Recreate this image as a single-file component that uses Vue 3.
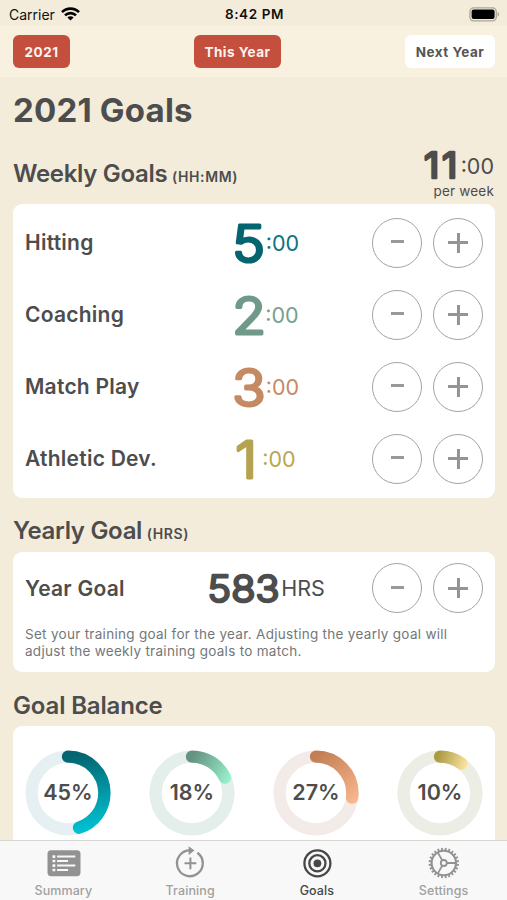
<script setup>
const weekly = [
  { name: 'Hitting', hours: '5', width: 32, color: '#04646f', minor: '#0a7480' },
  { name: 'Coaching', hours: '2', width: 31, color: '#6f9a8a', minor: '#76a08f' },
  { name: 'Match Play', hours: '3', width: 32, color: '#c68a63', minor: '#c68a63' },
  { name: 'Athletic Dev.', hours: '1', width: 25, color: '#b5a352', minor: '#b8a74e' },
]

const RADIUS = 36.4
const LENGTH = 2 * Math.PI * RADIUS

const balance = [
  { id: 'hit', pct: 45, track: '#e6f0f2', from: '#04646f', to: '#00bfd0', box: [43, 6, 56, 80] },
  { id: 'coach', pct: 18, track: '#e4eeea', from: '#659382', to: '#98f0cb', box: [43, 8, 80, 30] },
  { id: 'match', pct: 27, track: '#f2ebe8', from: '#c47e55', to: '#f7b68b', box: [43, 6, 80, 52] },
  { id: 'dev', pct: 10, track: '#ecede4', from: '#aa9a42', to: '#ffe6a3', box: [40, 8, 70, 18] },
]

const teeth = Array.from({ length: 24 }, (_, i) => i * 15)
</script>

<template>
  <div class="screen">
    <div class="status">
      <div class="carrier">
        <span>Carrier</span>
        <svg width="19" height="14" viewBox="0 0 19 14" fill="none" stroke="#000" stroke-width="2.6">
          <path d="M1 5.2a12 12 0 0 1 17 0" />
          <path d="M4 8.4a7.8 7.8 0 0 1 11 0" />
          <path d="M9.5 13.6 6.4 10.5a4.4 4.4 0 0 1 6.2 0z" fill="#000" stroke="none" />
        </svg>
      </div>
      <div class="clock">8:42 PM</div>
      <svg class="battery" width="31" height="15" viewBox="0 0 31 15">
        <rect x="0.9" y="0.9" width="26.4" height="12.9" rx="3.8" fill="none" stroke="#aaa797" stroke-width="1.3" />
        <rect x="2.6" y="2.5" width="23" height="9.6" rx="2" fill="#000" />
        <path d="M28.6 5c2 .6 2 4.2 0 4.8z" fill="#aaa797" />
      </svg>
    </div>

    <div class="toolbar">
      <button class="pill red year">2021</button>
      <button class="pill red current">This Year</button>
      <button class="pill white next">Next Year</button>
    </div>

    <main>
      <h1>2021 Goals</h1>

      <div class="heading weekly-head">
        <h2><span class="wk">Weekly Goals</span> <small>(HH:MM)</small></h2>
        <div class="total">
          <div class="amount">
            <svg width="37" height="35"><text class="digits d-total" x="0" y="30" transform="scale(1.06 1)">11</text></svg>
            <span class="minor">:00</span>
          </div>
          <div class="per">per week</div>
        </div>
      </div>

      <section class="card goals">
        <div v-for="g in weekly" :key="g.name" class="row">
          <div class="label">{{ g.name }}</div>
          <div class="value">
            <svg :width="g.width" height="50">
              <text
                class="digits d-week"
                x="-1.5"
                y="44"
                transform="scale(1.1 1)"
                :style="{ fill: g.color, stroke: g.color }"
              >{{ g.hours }}</text>
            </svg>
            <span class="minor" :style="{ color: g.minor }">:00</span>
          </div>
          <button class="round"><i class="minus"></i></button>
          <button class="round"><i class="plus"></i></button>
        </div>
      </section>

      <div class="heading yearly-head">
        <h2><span class="wk">Yearly Goal</span> <small>(HRS)</small></h2>
      </div>

      <section class="card year-card">
        <div class="row">
          <div class="label">Year Goal</div>
          <div class="value">
            <svg width="73" height="36"><text class="digits d-year" x="-0.5" y="32" transform="scale(1.07 1)">583</text></svg>
            <span class="minor">HRS</span>
          </div>
          <button class="round"><i class="minus"></i></button>
          <button class="round"><i class="plus"></i></button>
        </div>
        <p>Set your training goal for the year. Adjusting the yearly goal will<br />adjust the weekly training goals to match.</p>
      </section>

      <div class="heading balance-head"><h2><span class="bal">Goal Balance</span></h2></div>

      <section class="card balance">
        <svg v-for="b in balance" :key="b.id" width="86" height="86" viewBox="0 0 86 86">
          <defs>
            <linearGradient
              :id="b.id"
              gradientUnits="userSpaceOnUse"
              :x1="b.box[0]"
              :y1="b.box[1]"
              :x2="b.box[2]"
              :y2="b.box[3]"
            >
              <stop offset="0" :stop-color="b.from" />
              <stop offset="1" :stop-color="b.to" />
            </linearGradient>
          </defs>
          <circle cx="43" cy="43" :r="RADIUS" fill="none" :stroke="b.track" stroke-width="12.4" />
          <path
            d="M43 6.6a36.4 36.4 0 0 1 0 72.8a36.4 36.4 0 0 1 0-72.8"
            fill="none"
            :stroke="`url(#${b.id})`"
            stroke-width="12.4"
            stroke-linecap="round"
            :stroke-dasharray="`${(b.pct / 100) * LENGTH} 400`"
          />
          <text class="pct" x="43" y="50" text-anchor="middle">{{ b.pct }}%</text>
        </svg>
      </section>
    </main>

    <nav>
      <div class="tab">
        <svg width="34" height="32" viewBox="0 0 34 32">
          <rect x="1.5" y="3.2" width="33" height="26" rx="3.6" fill="#929292" />
          <g stroke="#f8f8f8" stroke-width="2">
            <path d="M6.5 9.6h2.8M6.5 14h2.8M6.5 18.6h2.8M6.5 23h2.8" stroke-width="2.6" />
            <path d="M11.1 9.6h18.2M11.1 14h11M11.1 18.6h18.2M11.1 23h11" />
          </g>
        </svg>
        <span>Summary</span>
      </div>
      <div class="tab">
        <svg width="34" height="32" viewBox="0 0 34 32" fill="none" stroke="#929292" stroke-width="2.3">
          <path d="M24.4 5.8A12.9 12.9 0 1 1 17.4 3.4" />
          <path d="M15.6-.8 21.4 3.4 15.6 7.9z" fill="#929292" stroke="none" />
          <path d="M17.4 10.4v11.8M11.5 16.3h11.8" stroke-width="2" />
        </svg>
        <span>Training</span>
      </div>
      <div class="tab active">
        <svg width="34" height="32" viewBox="0 0 34 32" fill="none" stroke="#474747" stroke-width="2.3">
          <circle cx="17.4" cy="16.3" r="13" />
          <circle cx="17.4" cy="16.3" r="8.1" />
          <circle cx="17.4" cy="16.3" r="3.9" fill="#474747" stroke="none" />
        </svg>
        <span>Goals</span>
      </div>
      <div class="tab">
        <svg width="34" height="32" viewBox="0 0 34 32" fill="none" stroke="#929292" stroke-width="1.8">
          <circle cx="16.8" cy="16" r="12.2" stroke-width="2.1" />
          <circle cx="16.8" cy="16" r="3" />
          <path d="M19.8 16h9.2M15.3 13.4 10.7 5.4M15.3 18.6 10.7 26.6" />
          <path v-for="a in teeth" :key="a" d="M16.8 3.4V.8" stroke-width="1.8" :transform="`rotate(${a + 7.5} 16.8 16)`" />
        </svg>
        <span>Settings</span>
      </div>
    </nav>
  </div>
</template>

<style>
body {
  background: #f3ecda;
  overflow: hidden;
}
</style>

<style scoped>
.screen {
  height: 900px;
  display: flex;
  flex-direction: column;
  overflow: hidden;
  background: #f3ecda;
  color: #4d4d4d;
  font-family: Inter, 'Liberation Sans', sans-serif;
  box-sizing: border-box;
}
.screen * {
  box-sizing: border-box;
}
svg {
  display: block;
  flex: none;
  overflow: visible;
}
.status {
  flex: none;
  height: 26px;
  padding: 2px 7px 0 9px;
  display: grid;
  grid-template-columns: 1fr auto 1fr;
  align-items: center;
  color: #111;
  font-size: 14px;
}
.carrier {
  display: flex;
  align-items: center;
  gap: 6px;
}
.clock {
  font-weight: 600;
  font-size: 13.5px;
  letter-spacing: 0.6px;
}
.battery {
  justify-self: end;
}
.toolbar {
  flex: none;
  height: 51px;
  padding: 0 12px 0 13px;
  display: flex;
  align-items: center;
  justify-content: space-between;
  background: #f9f1e0;
}
button {
  font-family: inherit;
  border: 0;
  padding: 0;
  margin: 0;
}
.pill {
  height: 33px;
  border-radius: 6px;
  font-size: 13.5px;
  font-weight: 700;
  letter-spacing: 0.5px;
  white-space: nowrap;
}
.red {
  background: #c44f3d;
  color: #fdf3ee;
}
.white {
  background: #fff;
  color: #555;
}
.year {
  width: 57px;
}
.current {
  width: 87px;
}
.next {
  width: 90px;
}
main {
  flex: 1;
  min-height: 0;
  overflow: hidden;
  padding: 0 12px 0 13px;
}
h1 {
  margin: 0;
  height: 66px;
  line-height: 66px;
  font-size: 33px;
  font-weight: 700;
  letter-spacing: 0.2px;
  white-space: nowrap;
}
.heading {
  display: flex;
  justify-content: space-between;
}
h2 {
  margin: 0;
  font-size: 24px;
  line-height: 30px;
  font-weight: 600;
  white-space: nowrap;
}
.wk {
  letter-spacing: -0.3px;
}
.bal {
  letter-spacing: -0.15px;
}
small {
  font-size: 14px;
  letter-spacing: 0.6px;
  margin-left: -1.5px;
}
.weekly-head {
  height: 60.5px;
}
.weekly-head h2 {
  padding-top: 16px;
}
.total {
  padding: 5px 1px 0 0;
  display: flex;
  flex-direction: column;
  align-items: flex-end;
}
.amount {
  display: flex;
  align-items: center;
}
.per {
  font-size: 13.5px;
  line-height: 16px;
  letter-spacing: 0.2px;
}
.minor {
  font-size: 21.5px;
  font-weight: 400;
  line-height: 30px;
}
.digits {
  font-family: Inter, sans-serif;
  fill: #4d4d4d;
  stroke: #4d4d4d;
  stroke-linejoin: round;
}
.d-total {
  font-size: 35.5px;
  font-weight: 400;
  stroke-width: 2.5px;
  letter-spacing: 2.5px;
}
.d-week {
  font-size: 50px;
  font-weight: 300;
  stroke-width: 3px;
}
.d-year {
  font-size: 37px;
  font-weight: 300;
  stroke-width: 2.5px;
  letter-spacing: 0.2px;
}
.card {
  background: #fff;
  border-radius: 9px;
  padding: 0 12px;
}
.goals {
  height: 294px;
  padding-top: 3px;
}
.row {
  height: 72.1px;
  display: grid;
  grid-template-columns: 136px 211px 50px 50px;
  align-items: center;
}
.row .round + .round {
  margin-left: 11px;
}
.label {
  font-size: 21px;
  font-weight: 600;
  letter-spacing: 0.25px;
  white-space: nowrap;
}
.value {
  display: flex;
  align-items: center;
  justify-content: center;
}
.round {
  width: 50px;
  height: 50px;
  border: 1.3px solid #a3a3a3;
  border-radius: 50%;
  background: #fff;
  display: grid;
  place-items: center;
}
.minus {
  width: 13px;
  height: 3px;
  margin-bottom: 2px;
  background: #999;
}
.plus {
  width: 20px;
  height: 20px;
  background:
    linear-gradient(#949494, #949494) center / 20px 3px no-repeat,
    linear-gradient(#949494, #949494) center / 3px 20px no-repeat;
}
.yearly-head {
  height: 54px;
  padding-top: 18.5px;
}
.year-card {
  height: 120.5px;
}
.year-card .row {
  height: 73px;
}
p {
  margin: 1px 0 0;
  font-size: 13.5px;
  line-height: 17.5px;
  letter-spacing: 0.29px;
  color: #73777a;
  white-space: nowrap;
}
.balance-head {
  height: 54px;
  padding-top: 18.5px;
}
.balance {
  height: 140px;
  display: flex;
  justify-content: space-between;
  padding-top: 24px;
}
.pct {
  font-family: Inter, sans-serif;
  font-size: 21.5px;
  font-weight: 600;
  fill: #4d4d4d;
}
nav {
  flex: none;
  height: 60px;
  display: grid;
  grid-template-columns: repeat(4, 1fr);
  background: #f8f8f8;
  border-top: 1px solid #d6d6d3;
}
.tab {
  display: flex;
  flex-direction: column;
  align-items: center;
  padding-top: 6px;
  color: #a0a0a0;
  font-size: 12.5px;
  font-weight: 500;
  letter-spacing: 0.1px;
}
.tab span {
  line-height: 16px;
  margin-top: 4px;
}
.active {
  color: #474747;
}
</style>
